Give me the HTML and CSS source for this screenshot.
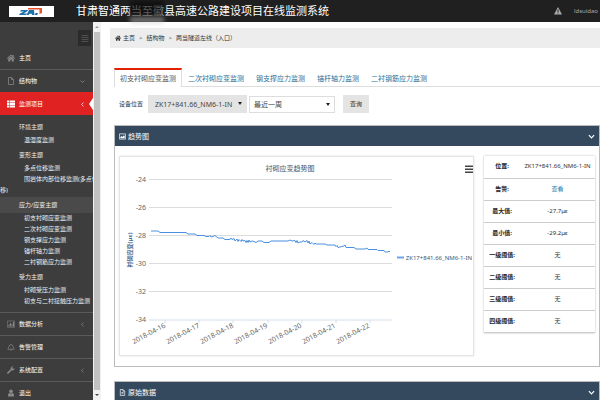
FILE: index.html
```html
<!DOCTYPE html>
<html lang="zh-CN">
<head>
<meta charset="utf-8">
<title>在线监测系统</title>
<link rel="stylesheet" href="styles.css">
</head>
<body>
<svg class="defs" aria-hidden="true">
  <symbol id="home" viewBox="0 0 16 16"><path d="M8 1 0 8.500l1.200 1.300L8 3.600l6.800 6.200L16 8.500l-2.500-2.400V2h-2v2.200zM8 5 2.500 10v5H6.500v-4h3v4h4v-5z"/></symbol>
  <symbol id="file" viewBox="0 0 16 16"><path d="M3 1h6l4 4v10H3zM9 1v4h4" fill="none" stroke="currentColor" stroke-width="1.500"/></symbol>
  <symbol id="doc" viewBox="0 0 16 16"><path d="M3 1h6l4 4v10H3zM9 1v4h4M5.500 8h5M5.500 11h5" fill="none" stroke="currentColor" stroke-width="1.500"/></symbol>
  <symbol id="list" viewBox="0 0 16 16"><path d="M0 1h4v4H0zM5 1h11v4H5zM0 6h4v4H0zM5 6h11v4H5zM0 11h4v4H0zM5 11h11v4H5z"/></symbol>
  <symbol id="bars" viewBox="0 0 16 16"><path d="M.7 2h14.600v12.500H.7z" fill="none" stroke="currentColor" stroke-width="1.200"/><path d="M3 9h2v4H3zM6 6h2v7H6zM9 8h2v5H9zM12 4h2v9h-2z"/></symbol>
  <symbol id="bell" viewBox="0 0 16 16"><path d="M8 1.500v1M1.500 12.500C4 10.500 3.500 3 8 3s4 7.500 6.500 9.500zM6.500 13c0 2.500 3 2.500 3 0" fill="none" stroke="currentColor" stroke-width="1.400"/></symbol>
  <symbol id="wrench" viewBox="0 0 16 16"><path d="M15.500 4.500a4.500 4.500 0 0 1-6 4L3 15a1.600 1.600 0 0 1-2.300-2.300L7.500 6.300A4.500 4.500 0 0 1 13 .6l-2.500 2 .5 2.500 2.400.3z"/></symbol>
  <symbol id="user" viewBox="0 0 16 16"><circle cx="8" cy="4.500" r="3.700"/><path d="M2 15c-.5-5 1.500-7 3-7 2 1.500 4 1.500 6 0 1.500 0 3.500 2 3 7z"/></symbol>
  <symbol id="left" viewBox="0 0 16 16"><path d="M11 2 5 8l6 6" fill="none" stroke="currentColor" stroke-width="2.400"/></symbol>
  <symbol id="down" viewBox="0 0 16 16"><path d="m2 5 6 6 6-6" fill="none" stroke="currentColor" stroke-width="2.800"/></symbol>
  <symbol id="image" viewBox="0 0 16 16"><path d="M1 2h14v12H1z" fill="none" stroke="currentColor" stroke-width="1.600"/><path d="M3 12V9l3-2 2 2 3-4 2 2v5z"/></symbol>
  <symbol id="menu" viewBox="0 0 16 16"><path d="M0 1h16v3H0zM0 7h16v3H0zM0 13h16v3H0z"/></symbol>
  <symbol id="lines" viewBox="0 0 16 16"><path d="M1 1h14v1H1zM1 5h14v1H1zM1 9h14v1H1zM1 13h14v1H1z"/></symbol>
  <symbol id="warn" viewBox="0 0 16 16"><path fill-rule="evenodd" d="M8 0 16 15H0zM7 5v5h2V5zM7 11v2h2v-2z"/></symbol>
</svg>

<header class="topbar">
  <a class="logo" href="#" aria-label="首页">
    <svg viewBox="0 0 45 11">
      <g fill="#1d6fae"><path d="M12 4h7l-1 1.500-3.500 2H18L17 9h-7l1-1.500 4-2h-4z"/><path d="M20 4h5l.5 5H23l-.2-1.200H20.500L19.500 9H17.500z"/><path d="M26.500 7h2.500l-.8 2h-2.300z"/></g>
      <path d="M19 2h14v5l-2.500 1V3.500H19z" fill="#e8532b"/>
    </svg>
  </a>
  <h1>甘肃智通两当至徽县高速公路建设项目在线监测系统</h1>
  <div class="account">
    <svg class="warn"><use href="#warn"/></svg>
    <span>ldsuidao</span>
  </div>
  <span class="smudge"></span>
</header>

<div class="shell">
  <nav class="sidebar">
    <button class="toggler" aria-label="菜单"><svg><use href="#lines"/></svg></button>
    <a class="item" href="#"><svg><use href="#home"/></svg><span>主页</span></a>
    <a class="item" href="#"><svg><use href="#file"/></svg><span>结构物</span><svg class="arrow"><use href="#down"/></svg></a>
    <a class="item active" href="#"><svg><use href="#list"/></svg><span>监测项目</span><svg class="arrow"><use href="#left"/></svg></a>
    <div class="submenu">
      <section><h2>环境主题</h2><a href="#">温湿度监测</a></section>
      <section><h2>变形主题</h2><a href="#">多点位移监测</a><a class="long" href="#">围岩体内部位移监测(多点位<br>移)</a></section>
      <section><h2 class="open">应力/应变主题</h2><a href="#">初支衬砌应变监测</a><a href="#">二次衬砌应变监测</a><a href="#">钢支撑应力监测</a><a href="#">锚杆轴力监测</a><a href="#">二衬钢筋应力监测</a></section>
      <section><h2>受力主题</h2><a href="#">衬砌受压力监测</a><a href="#">初支与二衬接触压力监测</a></section>
    </div>
    <a class="item" href="#"><svg><use href="#bars"/></svg><span>数据分析</span><svg class="arrow"><use href="#left"/></svg></a>
    <a class="item" href="#"><svg><use href="#bell"/></svg><span>告警管理</span></a>
    <a class="item" href="#"><svg><use href="#wrench"/></svg><span>系统配置</span><svg class="arrow"><use href="#left"/></svg></a>
    <a class="item" href="#"><svg><use href="#user"/></svg><span>退出</span></a>
  </nav>
  <div class="scrollbar" aria-hidden="true"><i class="up"></i><i class="thumb"></i><i class="dn"></i></div>

  <main>
    <nav class="crumbs">
      <svg><use href="#home"/></svg><a href="#">主页</a><b>&gt;</b><a href="#">结构物</a><b>&gt;</b><span>两当隧道左线（入口）</span>
    </nav>
    <div class="content">
      <nav class="tabs">
        <a class="current" href="#">初支衬砌应变监测</a>
        <a href="#">二次衬砌应变监测</a>
        <a href="#">钢支撑应力监测</a>
        <a href="#">锚杆轴力监测</a>
        <a href="#">二衬钢筋应力监测</a>
      </nav>
      <form class="filters">
        <label for="device">设备位置</label>
        <span class="pick device"><select id="device"><option>ZK17+841.66_NM6-1-IN</option></select></span>
        <span class="pick period"><select id="period" aria-label="时间范围"><option>最近一周</option></select></span>
        <button type="button">查询</button>
      </form>

      <section class="panel">
        <h3><svg><use href="#image"/></svg>趋势图<svg class="fold"><use href="#down"/></svg></h3>
        <div class="panel-body">
          <div class="chart">
            <svg viewBox="120 157 353 198" role="img" aria-label="衬砌应变趋势图">
              <text class="chart-title" x="290" y="171" text-anchor="middle">衬砌应变趋势图</text>
              <use href="#menu" x="465" y="165" width="8" height="8" fill="#444"/>
              <path class="grid" d="M149 179.500H392M149 207.500H392M149 235.500H392M149 263.500H392M149 291.500H392"/>
              <path class="axis" d="M149 320H392M165 320v3M199 320v3M233 320v3M268 320v3M302 320v3M336 320v3M370 320v3"/>
              <g class="ylabels" text-anchor="end">
                <text x="146" y="182">-24</text><text x="146" y="210">-26</text><text x="146" y="238">-28</text><text x="146" y="266">-30</text><text x="146" y="294">-32</text><text x="146" y="322">-34</text>
              </g>
              <text class="ytitle" text-anchor="middle" transform="translate(132 250) rotate(-90)">衬砌应变(με)</text>
              <g class="xlabels" text-anchor="end">
                <text transform="translate(166 327) rotate(-28)">2018-04-16</text>
                <text transform="translate(200 327) rotate(-28)">2018-04-17</text>
                <text transform="translate(234 327) rotate(-28)">2018-04-18</text>
                <text transform="translate(268 327) rotate(-28)">2018-04-19</text>
                <text transform="translate(302 327) rotate(-28)">2018-04-20</text>
                <text transform="translate(336 327) rotate(-28)">2018-04-21</text>
                <text transform="translate(370 327) rotate(-28)">2018-04-22</text>
              </g>
              <polyline class="series" points="151,231 158,231 160,232.500 186,232.500 188,234 195,234 197,235.500 204,235.500 206,236.500 209,236.500 210,235.500 211,237 213,236.500 215,235.500 218,238 223,238 225,239.500 230,239.500 231,238 232,239.500 234,238.500 235,241 237,239 238,241.500 239,239.500 241,241.500 242,239.500 243,241 245,240.500 246,242.500 247,240.500 248,242.500 249,240 250,242 252,241 254,241.500 256,242.500 258,241 262,241 264,242.500 269,242.500 271,241 288,241 290,240 292,241 295,240.500 296,242.500 297,240.500 298,243 300,242 302,242 303,240.500 305,242 307,240.500 308,243 309,241 310,244 312,242.500 314,244.500 315,243 316,244 325,244 327,245 335,245 336,246.500 337,245.500 338,247.500 344,246 345,245 346,247.500 354,247.500 356,249 365,249 367,248 368,249.500 377,249.500 378,250.500 384,250.500 385,252 388,252 389,251 390,252"/>
              <path class="legend-line" d="M397 257.500h7"/>
              <text class="legend" x="472" y="260" text-anchor="end">ZK17+841.66_NM6-1-IN</text>
            </svg>
          </div>
          <table class="info">
            <tr><th>位置:</th><td>ZK17+841.66_NM6-1-IN</td></tr>
            <tr><th>告警:</th><td><a href="#">查看</a></td></tr>
            <tr><th>最大值:</th><td>-27.7με</td></tr>
            <tr><th>最小值:</th><td>-29.2με</td></tr>
            <tr><th>一级阈值:</th><td>无</td></tr>
            <tr><th>二级阈值:</th><td>无</td></tr>
            <tr><th>三级阈值:</th><td>无</td></tr>
            <tr><th>四级阈值:</th><td>无</td></tr>
          </table>
        </div>
      </section>

      <section class="panel">
        <h3><svg><use href="#doc"/></svg>原始数据<svg class="fold"><use href="#down"/></svg></h3>
      </section>
    </div>
  </main>
</div>
</body>
</html>
```
FILE: styles.css
```css
* { box-sizing: border-box; }
body {
  margin: 0;
  height: 100vh;
  display: flex;
  flex-direction: column;
  overflow: hidden;
  background: #fff;
  color: #333;
  font: 6px/11px "Noto Sans", "Noto Sans CJK SC", sans-serif;
}
a { color: inherit; text-decoration: none; }
svg { fill: currentColor; flex: none; }
.defs { position: absolute; width: 0; height: 0; }
h1, h2, h3 { margin: 0; font-weight: 400; }

.topbar {
  position: relative;
  z-index: 1;
  flex: none;
  display: flex;
  align-items: center;
  height: 22px;
  padding: 0 2px 0 9px;
  background: #202020;
  color: #fff;
}
.logo { width: 45px; height: 11px; margin-right: 22px; background: #fff; }
.logo svg { display: block; width: 100%; height: 100%; }
.topbar h1 { font-size: 11px; line-height: 20px; white-space: nowrap; }
.account {
  display: flex;
  align-items: center;
  gap: 12px;
  margin-left: auto;
  color: #aaa;
}
.warn { width: 8px; height: 8px; }
.smudge {
  position: absolute;
  left: 130px;
  top: 1px;
  width: 34px;
  height: 24px;
  background: linear-gradient(rgba(10, 10, 10, .7) 60%, rgba(210, 210, 210, .6) 75%, rgba(160, 160, 160, .1));
  filter: blur(2px);
}

.shell { flex: 1; display: flex; min-height: 0; overflow: hidden; }
.sidebar {
  flex: none;
  width: 93px;
  overflow: hidden;
  background: #3d3d3d;
  color: #f0f0f0;
}
.toggler {
  display: flex;
  align-items: center;
  justify-content: center;
  width: 13px;
  height: 16px;
  margin: 8px 2px 0 auto;
  padding: 0;
  border: 0;
  background: #2b2b2b;
  color: #777;
}
.toggler svg { width: 8px; height: 9px; }
.item {
  position: relative;
  display: flex;
  align-items: center;
  gap: 4px;
  height: 23px;
  padding: 0 8px 0 7px;
  border-top: 1px solid #5a5a5a;
  color: #fff;
}
.toggler + .item { border-top-color: transparent; }
.item svg { width: 8px; height: 8px; color: #888; }
.item .arrow { width: 5px; height: 5px; margin-left: auto; }
.item.active { border-color: #e02222; background: #e02222; }
.item.active svg { color: #fff; }
.item.active::after {
  content: "";
  position: absolute;
  right: 0;
  top: 5px;
  border: 6px solid transparent;
  border-left-width: 0;
  border-right: 4px solid #fff;
}
.submenu { padding: 4px 0 5px; }
.submenu section + section { margin-top: 1px; }
.submenu h2 { padding-left: 19px; font-size: 6px; line-height: 16px; }
.submenu .open { background: #4a4a4a; }
.submenu a { display: block; height: 11px; padding-left: 24px; white-space: nowrap; }
.submenu .long { height: 22px; padding-left: 0; text-indent: 24px; }
.submenu .long br { line-height: 11px; }
.submenu .long { text-indent: 24px; }

.scrollbar {
  flex: none;
  display: flex;
  flex-direction: column;
  align-items: center;
  width: 8px;
  padding: 3px 0;
  background: #f1f1f1;
}
.thumb { flex: 1; width: 6px; margin: 4px 0; background: #c1c1c1; }
.up, .dn { border: 2px solid transparent; }
.up { border-bottom-color: #999; border-top-width: 0; margin-top: 1px; }
.dn { border-top-color: #444; border-bottom-width: 0; margin-bottom: 1px; }

main { flex: 1; min-width: 0; padding: 6px 0 0 9px; }
.crumbs {
  display: flex;
  align-items: center;
  height: 20px;
  padding-left: 5px;
  background: #ededed;
}
.crumbs svg { width: 6px; height: 6px; margin-right: 2px; }
.crumbs b { margin: 0 4px; font-weight: 400; }
.content { padding: 20px 0 0 4px; }

.tabs { display: flex; height: 19px; border-bottom: 1px solid #ddd; font-size: 7px; }
.tabs a {
  padding: 2px 6px 0;
  line-height: 17px;
  color: #1f6f96;
  white-space: nowrap;
}
.tabs .current {
  height: 19px;
  padding: 0 5px;
  border: 1px solid #ddd;
  border-top: 2px solid #e02200;
  border-bottom: 0;
  background: #fff;
  color: #555;
}

.filters { display: flex; align-items: center; height: 18px; margin: 8px 0 12px 5px; }
.filters label { width: 29px; }
.pick { position: relative; }
.pick::after {
  content: "";
  position: absolute;
  right: 5px;
  top: 7px;
  border: 2px solid transparent;
  border-top: 3px solid #222;
  border-bottom: 0;
}
.pick select {
  appearance: none;
  display: block;
  width: 100%;
  height: 100%;
  margin: 0;
  padding: 0 4px;
  border: 1px solid #ddd;
  border-radius: 0;
  background: #fff;
  color: #444;
  font: inherit;
  font-size: 7px;
}
.device { width: 99px; height: 18px; margin-right: 2px; }
.device select { padding: 0 6px; border-color: #e4e4e4; background: #e4e4e4; }
.period { width: 86px; height: 17px; margin-right: 8px; }
.filters button {
  width: 26px;
  height: 18px;
  padding: 0;
  border: 0;
  background: #e4e4e4;
  color: #333;
  font: inherit;
}

.panel { margin-bottom: 14px; border: 1px solid #bbb; }
.panel h3 {
  display: flex;
  align-items: center;
  gap: 2px;
  height: 20px;
  padding: 0 4px;
  background: #34495e;
  color: #fff;
  font-size: 7px;
}
.panel h3 svg { width: 7px; height: 7px; }
.panel h3 .fold { margin-left: auto; }
.panel-body { display: flex; align-items: flex-start; gap: 10px; padding: 10px 4px; }
.chart { flex: 1; min-width: 0; border: 1px solid #e4e4e4; box-shadow: 0 0 2px #e4e4e4; }
.chart svg { display: block; width: 100%; }
.chart-title { fill: #3e576f; font-size: 7px; }
.grid { fill: none; stroke: #dcdcdc; }
.axis { fill: none; stroke: #d3dfec; }
.ylabels, .xlabels { fill: #666; font-size: 7px; }
.ytitle { fill: #3e6b94; font-size: 6px; font-weight: 700; }
.series { fill: none; stroke: #4a90e2; stroke-width: 1; }
.legend-line { stroke: #6aa5e8; stroke-width: 2; }
.legend { fill: #3e576f; font-size: 6px; }

.info {
  flex: none;
  width: 111px;
  border-collapse: collapse;
  box-shadow: 0 0 2px #bbb;
}
.info tr { height: 22px; border-bottom: 1px solid #ccc; }
.info th { width: 36px; padding: 0; font-size: 6px; color: #222; text-align: center; }
.info td { padding: 0; font-size: 6px; text-align: center; }
.info a { color: #1f7fa8; }
```
